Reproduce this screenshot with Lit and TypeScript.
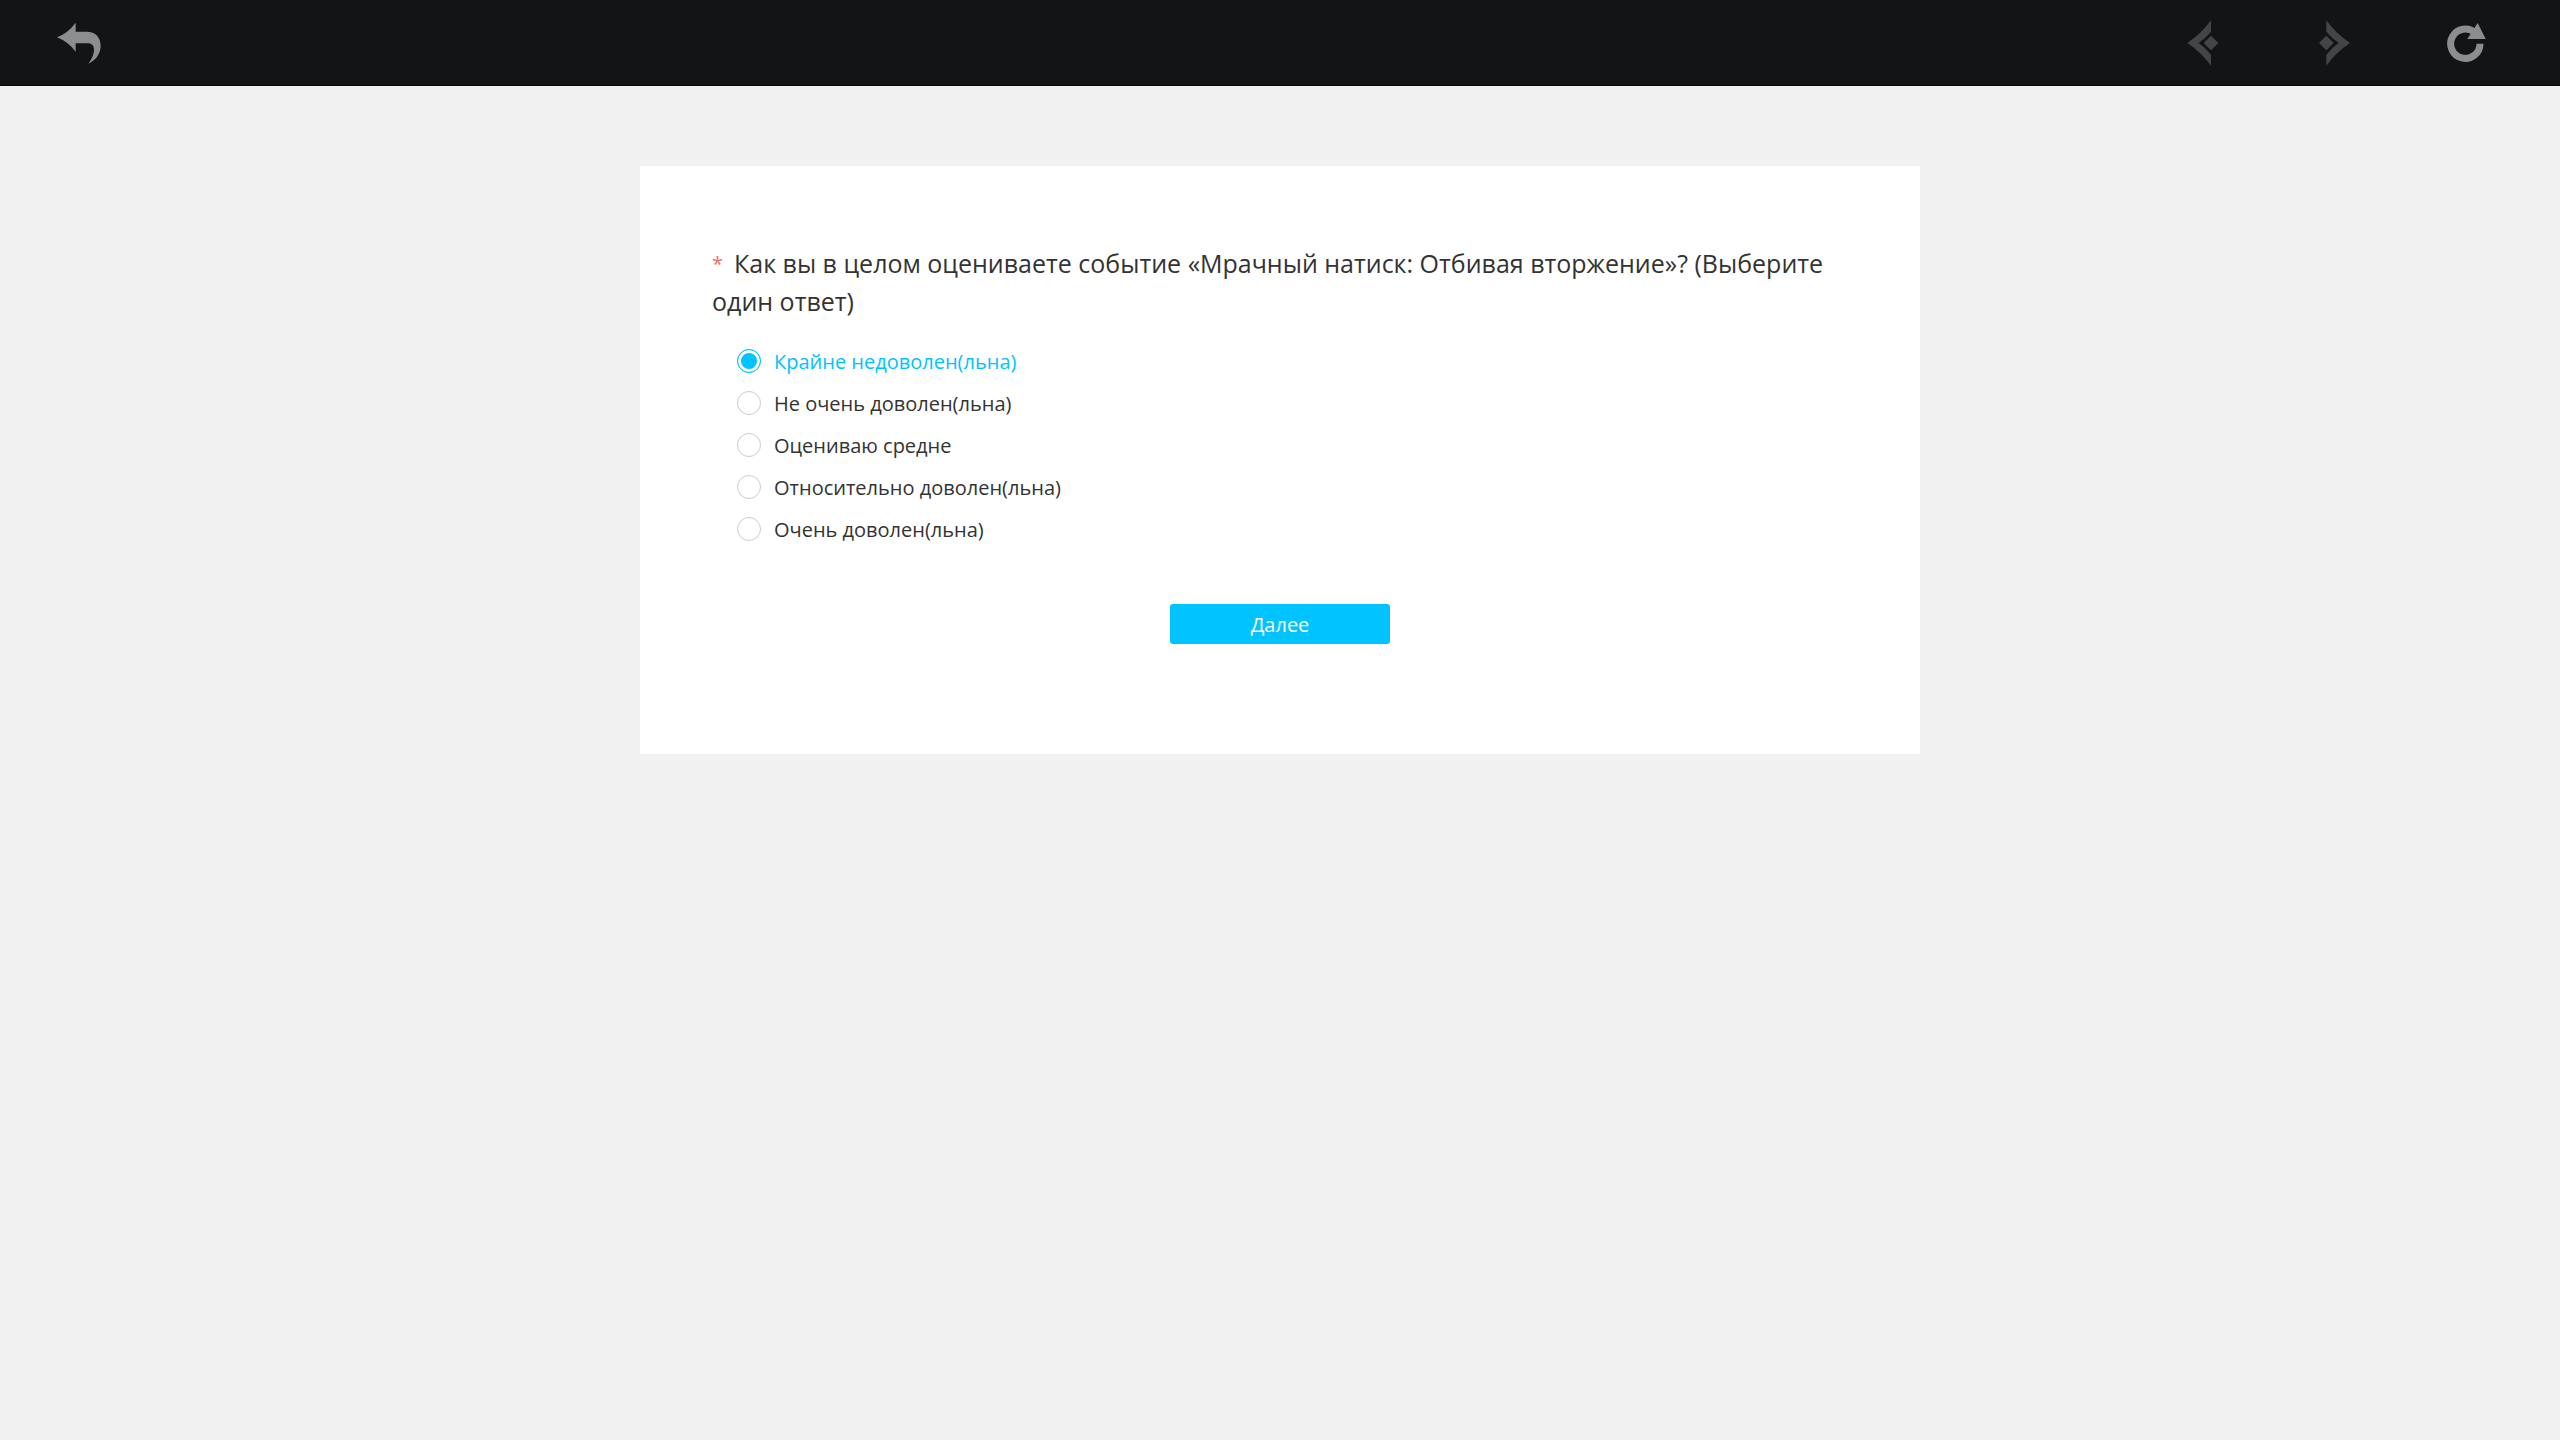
import { LitElement, html, css, svg } from "lit";
import { customElement, state } from "lit/decorators.js";

const backIcon = svg`<path d="M0 49Q33 36 56 5V32H88C117 32 131 50 131 75C131 98 116 118 94 128C106 112 111 99 111 87C111 73 104 67 92 67H56V92Q33 62 0 49Z" />`;
const prevIcon = svg`<path d="M16 66Q58 38 87-2V32Q70 52 50 66Q70 80 87 101V134Q58 94 16 66ZM65 66L87 44L109 66L87 88Z" />`;
const nextIcon = svg`<path d="M111 66Q69 38 40-2V32Q57 52 77 66Q57 80 40 101V134Q69 94 111 66ZM18 66L40 44L62 66L40 88Z" />`;
const reloadIcon = svg`<path class="ring" d="M108 68A44 44 0 1 1 94 36" /><path d="M101 6L125 54H70Z" />`;

@customElement("app-root")
export class AppRoot extends LitElement {
  static styles = css`
    :host {
      display: block;
      min-height: 100vh;
      background: #f1f1f1;
      color: #333;
      font-family: "Segoe UI", "Open Sans", "Noto Sans", sans-serif;
    }
    .bar {
      display: flex;
      align-items: center;
      justify-content: space-between;
      box-sizing: border-box;
      height: 86px;
      padding: 0 72px 0 57px;
      background: #121416;
      box-shadow: inset 0 -1px #0c0408;
    }
    .nav {
      display: flex;
      gap: 87px;
    }
    .icon {
      width: 44px;
      height: 44px;
      padding: 0;
      border: 0;
      background: none;
      color: #8c8d8e;
      cursor: pointer;
    }
    .icon:disabled {
      color: #444547;
      cursor: default;
    }
    .icon svg {
      display: block;
      width: 44px;
      height: 44px;
      overflow: visible;
      fill: currentColor;
    }
    .ring {
      fill: none;
      stroke: currentColor;
      stroke-width: 21;
    }
    .card {
      box-sizing: border-box;
      width: 50%;
      margin: 80px auto 0;
      padding: 78px 72px 110px;
      background: #fff;
    }
    .question {
      margin: 0;
      padding: 0;
      border: 0;
    }
    .title {
      padding: 0;
      margin-bottom: 20px;
      font-size: 25px;
      line-height: 38px;
    }
    .star {
      margin-right: 11px;
      color: #f56c6c;
      font-size: 20px;
      line-height: 20px;
      vertical-align: 2px;
    }
    .option {
      display: flex;
      align-items: center;
      gap: 13px;
      width: fit-content;
      height: 42px;
      padding-left: 25px;
      font-size: 20px;
      cursor: pointer;
    }
    .option.on {
      color: #00c3ff;
    }
    .radio {
      appearance: none;
      box-sizing: border-box;
      width: 24px;
      height: 24px;
      margin: 0;
      border: 1px solid #ccc;
      border-radius: 50%;
      background: #fff;
    }
    .radio:checked {
      border-color: #00c3ff;
      background: #00c3ff;
      box-shadow: inset 0 0 0 3px #fff;
    }
    .next {
      display: block;
      width: 220px;
      height: 40px;
      margin: 54px auto 0;
      padding: 0;
      border: 0;
      border-radius: 3px;
      background: #00c3ff;
      color: #fff;
      font: inherit;
      font-size: 20px;
      cursor: pointer;
    }
  `;

  @state() private selected = 0;

  private options = [
    "Крайне недоволен(льна)",
    "Не очень доволен(льна)",
    "Оцениваю средне",
    "Относительно доволен(льна)",
    "Очень доволен(льна)",
  ];

  private icon(label: string, shape: unknown, disabled = false) {
    return html`<button class="icon" type="button" aria-label=${label} ?disabled=${disabled}>
      <svg viewBox="0 0 132 132" aria-hidden="true">${shape}</svg>
    </button>`;
  }

  render() {
    return html`
      <header class="bar">
        ${this.icon("Назад", backIcon)}
        <nav class="nav">
          ${this.icon("Предыдущая страница", prevIcon, true)}
          ${this.icon("Следующая страница", nextIcon, true)}
          ${this.icon("Обновить", reloadIcon)}
        </nav>
      </header>
      <main class="card">
        <fieldset class="question">
          <legend class="title"><span class="star">*</span>Как вы в целом оцениваете событие «Мрачный натиск: Отбивая вторжение»? (Выберите один ответ)</legend>
          ${this.options.map(
            (text, i) => html`<label class="option ${i === this.selected ? "on" : ""}">
              <input
                class="radio"
                type="radio"
                name="rating"
                .checked=${i === this.selected}
                @change=${() => (this.selected = i)}
              />
              <span>${text}</span>
            </label>`
          )}
        </fieldset>
        <button class="next" type="button">Далее</button>
      </main>
    `;
  }
}
